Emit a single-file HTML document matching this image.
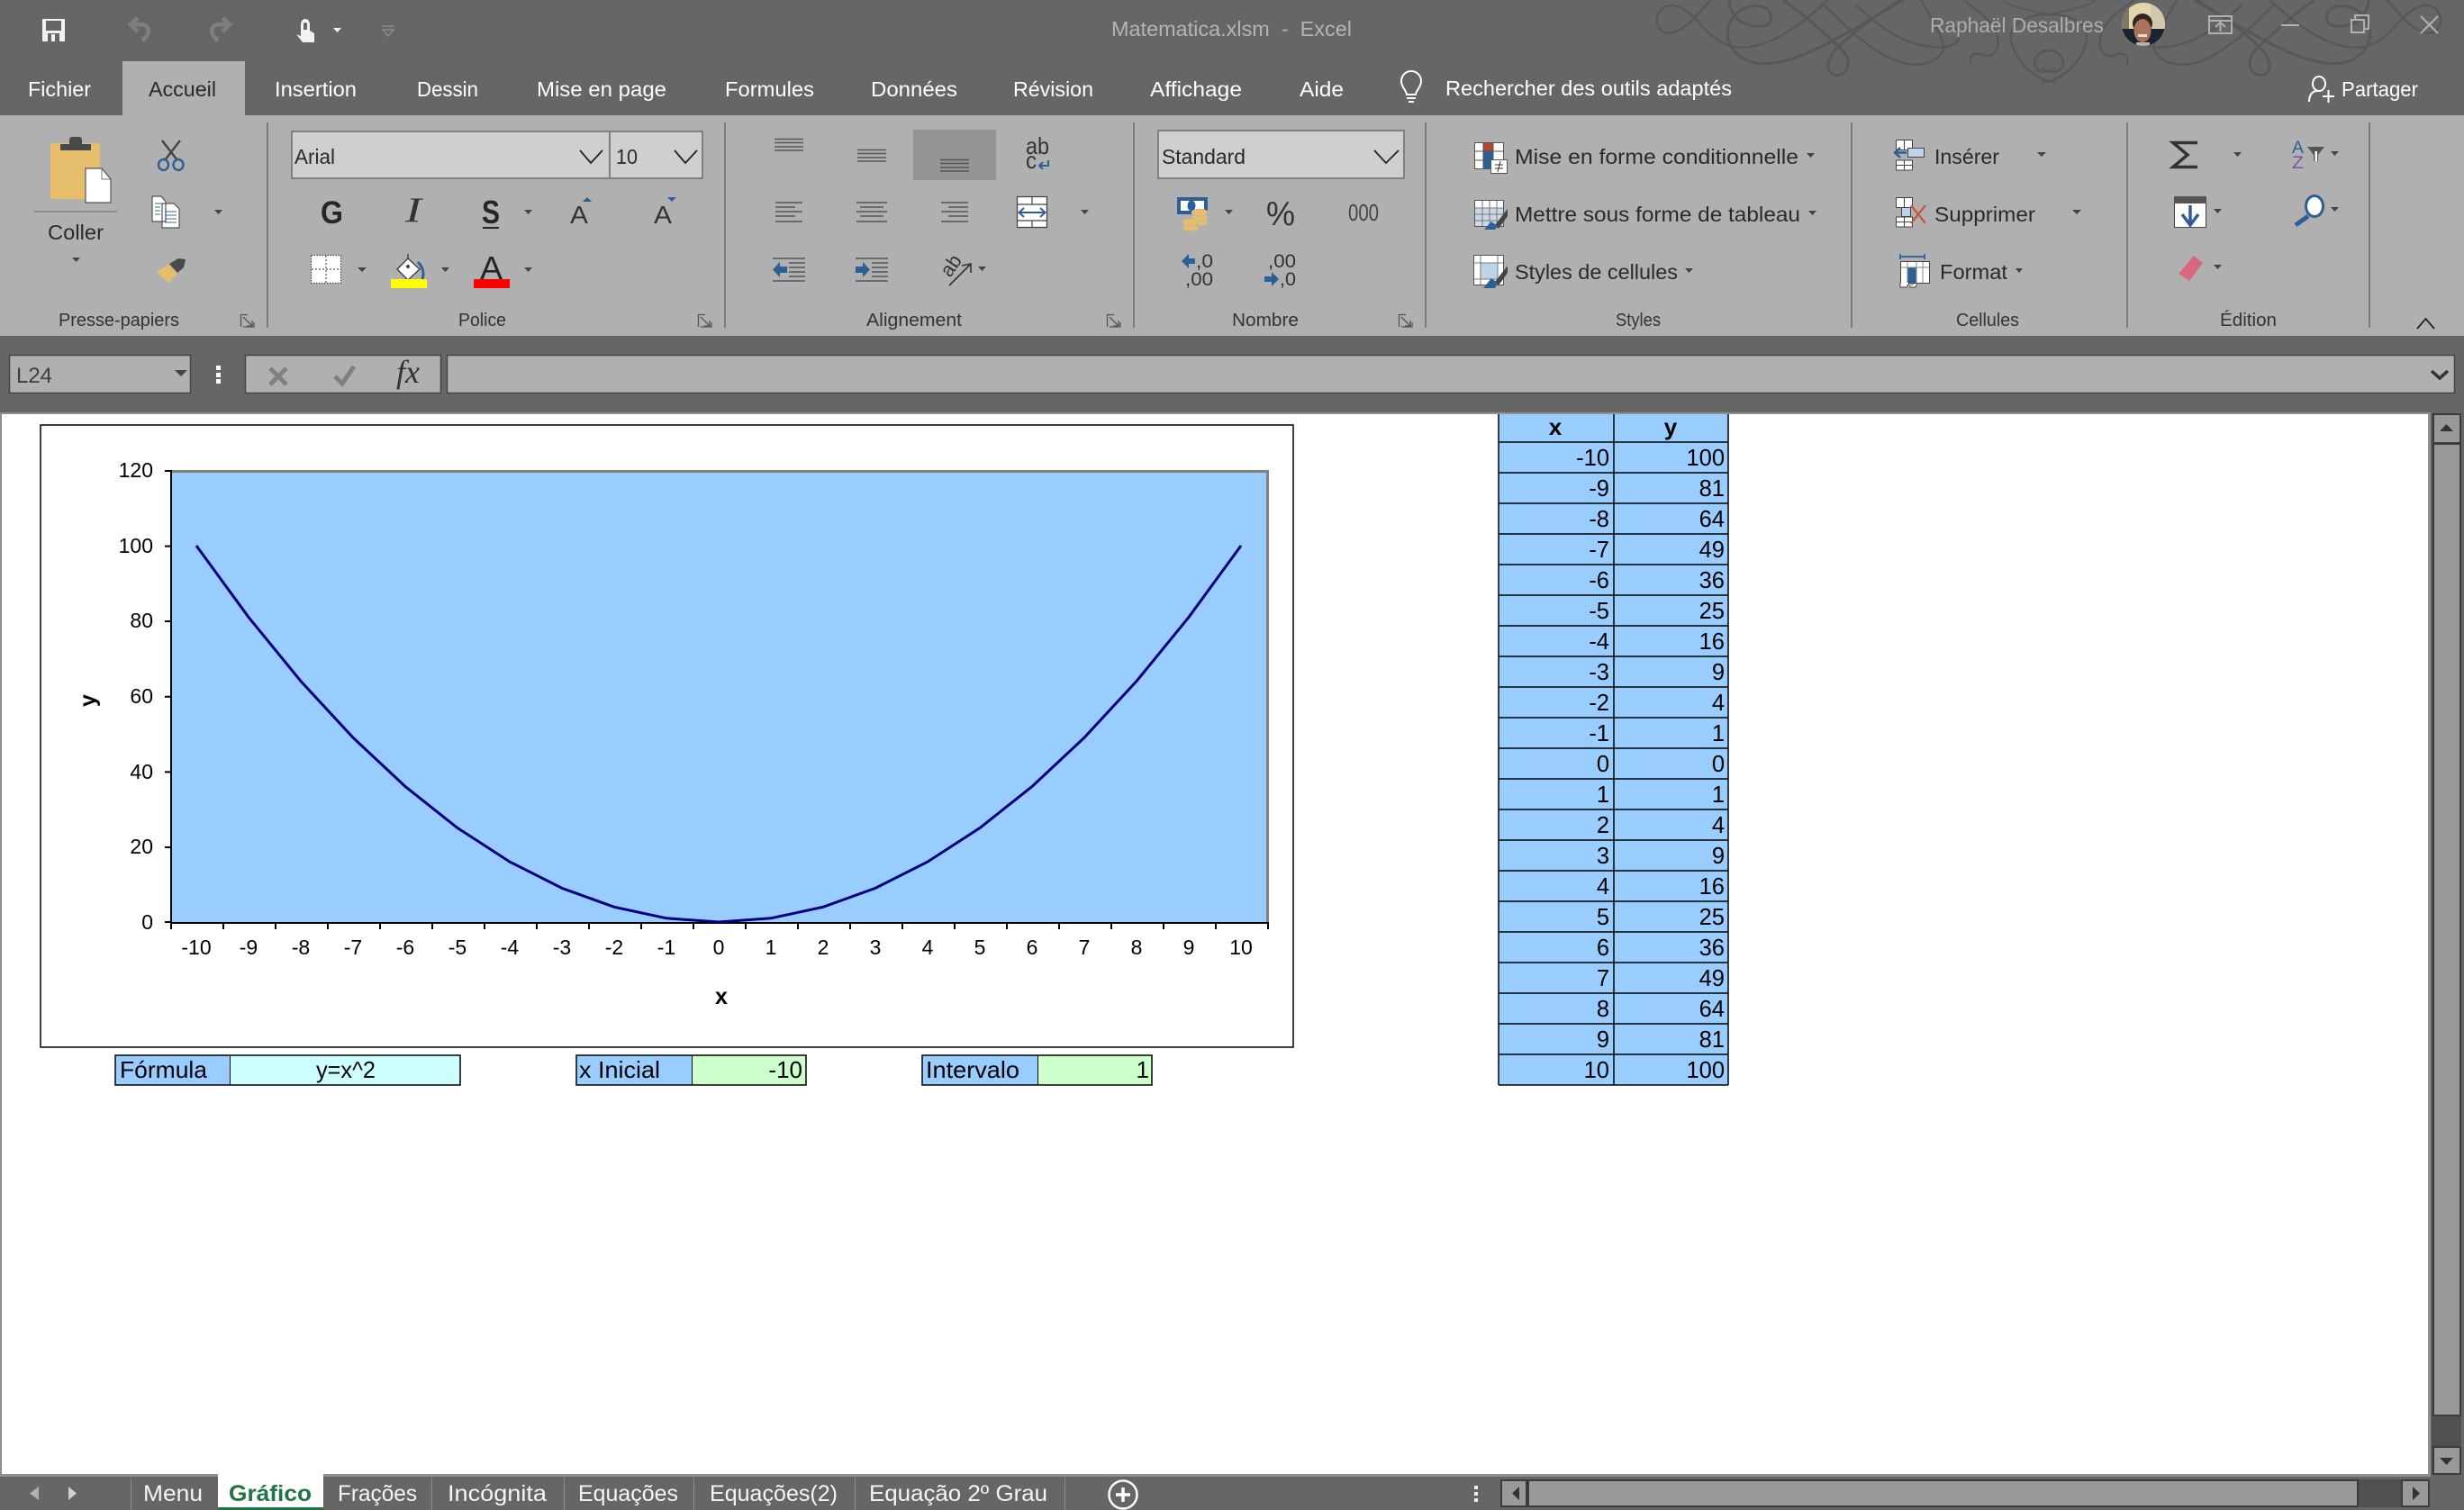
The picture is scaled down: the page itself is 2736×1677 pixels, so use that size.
<!DOCTYPE html>
<html lang="fr">
<head>
<meta charset="utf-8">
<title>Matematica.xlsm - Excel</title>
<style>
html,body{margin:0;padding:0;background:#666;width:2736px;height:1677px;overflow:hidden}
svg{display:block}
text{font-family:"Liberation Sans",Arial,sans-serif}
.w{fill:#fff;font-size:23.5px}
.r{fill:#2a2a2a;font-size:23.5px}
.l{fill:#333;font-size:20.5px}
.c{fill:#000;font-size:25.5px}
.a{fill:#000;font-size:23px}
.tb{fill:#f5f5f5;font-size:25px}
.ln{stroke:#555;stroke-width:1.6;fill:none}
.d{fill:#444}
</style>
</head>
<body>
<svg xmlns="http://www.w3.org/2000/svg" width="2736" height="1677" viewBox="0 0 2736 1677">
<rect width="2736" height="1677" fill="#666"/>

<!-- flourish -->
<g id="fl" transform="translate(1830,0) scale(.3333)" fill="none" stroke="#585858" stroke-width="7">
<path d="M210,0 C170,40 120,110 70,110 C30,110 15,60 45,30 C80,0 130,30 170,75 C210,120 250,158 310,158 C400,158 490,100 600,0"/>
<path d="M270,0 C270,20 280,45 300,65 C330,90 390,95 405,75 C420,50 400,20 360,20 C310,20 265,60 265,110 C265,170 320,212 385,212 C500,212 630,130 850,0" stroke-width="9"/>
<path d="M450,0 C520,50 600,120 650,170 C680,205 665,250 630,250 C590,250 590,200 630,160 C680,110 760,50 840,0" stroke-width="9"/>
<path d="M580,10 C660,90 780,215 890,215 C950,215 990,180 985,150 C975,110 940,60 910,0"/>
<path d="M690,15 C770,90 860,160 980,158 C1040,150 1050,120 1020,90"/>
<path d="M1075,215 C1065,185 1090,170 1120,185 C1160,195 1175,150 1160,110 C1140,60 1090,30 1050,0"/>
<path d="M1360,275 C1280,270 1200,180 1210,110 C1220,70 1280,40 1360,50"/>
<path d="M1360,170 C1310,160 1280,190 1290,220 C1300,250 1340,240 1360,225"/>
<path d="M1180,0 C1200,20 1280,40 1360,50" stroke-width="5"/>
</g>
<use href="#fl" transform="translate(4550,0) scale(-1,1)"/>

<!-- quick access -->
<rect x="47" y="21" width="25" height="25" fill="#f2f2f2"/>
<rect x="51" y="23" width="17" height="11" fill="#666"/>
<rect x="53" y="37" width="13" height="9" fill="#666"/>
<rect x="57" y="38" width="4" height="8" fill="#f2f2f2"/>
<g fill="none" stroke="#7f7f7f" stroke-width="4.5">
<path d="M158,45 C168,37 167,27 155,27 H146"/><path d="M153,20 L145,27 L153,35"/>
<path d="M242,45 C232,37 233,27 245,27 H254"/><path d="M247,20 L255,27 L247,35"/>
</g>
<path d="M334,40 V27 a5,6 0 1 1 10,0 V34 L349,37 V47 H336 L329,38 Z" fill="#f2f2f2"/>
<path d="M337,27 a2,2 0 0 1 4,0 V33 H337 Z" fill="#666"/>
<polygon points="370,31 379,31 374.500,36" fill="#f2f2f2"/>
<path d="M424,29 H438 M425,33 H437 L431,40 Z" fill="none" stroke="#8c8c8c" stroke-width="1.500"/>

<!-- title bar text -->
<text x="1234" y="40" style="font-size:23.500px" fill="#b4b4b4" textLength="267" lengthAdjust="spacingAndGlyphs">Matematica.xlsm &#160;-&#160; Excel</text>
<text x="2143" y="36" style="font-size:23.500px" fill="#adadad" textLength="193" lengthAdjust="spacingAndGlyphs">Raphaël Desalbres</text>

<!-- avatar -->
<clipPath id="av"><circle cx="2380" cy="27" r="24"/></clipPath>
<g clip-path="url(#av)">
<rect x="2356" y="3" width="48" height="48" fill="#e3d6ac"/>
<rect x="2388" y="3" width="16" height="28" fill="#cfc7ae"/>
<rect x="2356" y="3" width="8" height="40" fill="#7d7766"/>
<rect x="2356" y="32" width="48" height="19" fill="#1a2230"/>
<ellipse cx="2379" cy="26" rx="11" ry="11" fill="#33251f"/>
<ellipse cx="2379" cy="34" rx="9.500" ry="13" fill="#a9745a"/>
<rect x="2374" y="38" width="10" height="3" fill="#e8dcd2"/>
<rect x="2372" y="47" width="15" height="5" fill="#aeb3ba"/>
</g>

<!-- window controls -->
<g fill="none" stroke="#b0b0b0" stroke-width="2">
<rect x="2453" y="18" width="25" height="19"/><path d="M2453,23 H2478 M2465.500,35 V25 M2460,30 L2465.500,25 L2471,30"/>
<path d="M2533,28 H2553"/>
<rect x="2611" y="22" width="14" height="14"/><path d="M2615,22 V17 H2630 V32 H2625"/>
<path d="M2688,18 L2707,37 M2707,18 L2688,37"/>
</g>

<!-- ribbon background -->
<rect x="136" y="68" width="136" height="60" fill="#b0b0b0"/>
<rect x="0" y="128" width="2736" height="245" fill="#b0b0b0"/>

<!-- tabs -->
<text class="w" x="31" y="107" textLength="70" lengthAdjust="spacingAndGlyphs">Fichier</text>
<text class="r" x="165" y="107" textLength="75" lengthAdjust="spacingAndGlyphs">Accueil</text>
<text class="w" x="305" y="107" textLength="91" lengthAdjust="spacingAndGlyphs">Insertion</text>
<text class="w" x="463" y="107" textLength="68" lengthAdjust="spacingAndGlyphs">Dessin</text>
<text class="w" x="596" y="107" textLength="144" lengthAdjust="spacingAndGlyphs">Mise en page</text>
<text class="w" x="805" y="107" textLength="99" lengthAdjust="spacingAndGlyphs">Formules</text>
<text class="w" x="967" y="107" textLength="96" lengthAdjust="spacingAndGlyphs">Données</text>
<text class="w" x="1125" y="107" textLength="89" lengthAdjust="spacingAndGlyphs">Révision</text>
<text class="w" x="1277" y="107" textLength="102" lengthAdjust="spacingAndGlyphs">Affichage</text>
<text class="w" x="1443" y="107" textLength="49" lengthAdjust="spacingAndGlyphs">Aide</text>
<g fill="none" stroke="#fff" stroke-width="2">
<path d="M1562,105 C1561,99 1556,97 1556,90 a11,11 0 1 1 22,0 C1578,97 1573,99 1572,105 Z"/><path d="M1562,109 H1572 M1564,113 H1570"/>
</g>
<text class="w" x="1605" y="106" textLength="318" lengthAdjust="spacingAndGlyphs">Rechercher des outils adaptés</text>
<g fill="none" stroke="#fff" stroke-width="2">
<ellipse cx="2575" cy="93" rx="7" ry="8"/><path d="M2564,113 C2564,105 2568,101 2573,101 M2579,107 H2592 M2585.500,100 V114"/>
</g>
<text class="w" x="2600" y="107" textLength="85" lengthAdjust="spacingAndGlyphs">Partager</text>

<!-- group separators -->
<g fill="#7c7c7c">
<rect x="296" y="136" width="2" height="228"/><rect x="804" y="136" width="2" height="228"/>
<rect x="1258" y="136" width="2" height="228"/><rect x="1582" y="136" width="2" height="228"/>
<rect x="2055" y="136" width="2" height="228"/><rect x="2361" y="136" width="2" height="228"/>
<rect x="2630" y="136" width="2" height="228"/>
</g>

<!-- group labels -->
<text class="l" x="65" y="362" textLength="134" lengthAdjust="spacingAndGlyphs">Presse-papiers</text>
<text class="l" x="509" y="362" textLength="53" lengthAdjust="spacingAndGlyphs">Police</text>
<text class="l" x="962" y="362" textLength="106" lengthAdjust="spacingAndGlyphs">Alignement</text>
<text class="l" x="1368" y="362" textLength="74" lengthAdjust="spacingAndGlyphs">Nombre</text>
<text class="l" x="1794" y="362" textLength="50" lengthAdjust="spacingAndGlyphs">Styles</text>
<text class="l" x="2172" y="362" textLength="70" lengthAdjust="spacingAndGlyphs">Cellules</text>
<text class="l" x="2465" y="362" textLength="63" lengthAdjust="spacingAndGlyphs">Édition</text>

<!-- launchers -->
<g id="ln1" fill="none" stroke="#555" stroke-width="1.300">
<path d="M267.500,363 V349.500 H275 M270,352 L280,362 M280,356 V362 H274 M282,358 V363 H270"/>
</g>
<use href="#ln1" x="508"/><use href="#ln1" x="962"/><use href="#ln1" x="1286"/>

<!-- clipboard -->
<rect x="56" y="159" width="55" height="62" rx="3" fill="#e5bd6b"/>
<path d="M67,167 V160 H77 V155 a3,3 0 0 1 3,-3 h8 a3,3 0 0 1 3,3 V160 H101 V167 Z" fill="#4a4a4a"/>
<path d="M95,187 H113 L123,199 V225 H95 Z" fill="#fff" stroke="#555" stroke-width="1.200"/>
<path d="M113,187 V199 H123" fill="none" stroke="#777" stroke-width="1"/>
<rect x="38" y="234" width="92" height="2" fill="#8e8e8e"/>
<text class="r" x="53" y="266" textLength="62" lengthAdjust="spacingAndGlyphs">Coller</text>
<polygon class="d" points="80,286 89,286 84.500,291"/>
<g fill="none" stroke="#444" stroke-width="2.400"><path d="M180,156 L197,178 M200,156 L183,178"/></g>
<g fill="none" stroke="#2b5f96" stroke-width="2.400"><ellipse cx="181.500" cy="183" rx="5.500" ry="6"/><ellipse cx="198" cy="183" rx="5.500" ry="6"/></g>
<path d="M169,218 H179 L184,224 V246 H169 Z M180,226 H193 L199,232 V253 H180 Z" fill="#fff" stroke="#555" stroke-width="1.200"/>
<path d="M172,226 H181 M172,230 H178 M172,234 H178 M172,238 H178 M183,235 H196 M183,239 H196 M183,243 H196 M183,247 H196" stroke="#3b6d99" stroke-width="1"/>
<polygon class="d" points="238,233 247,233 242.500,238"/>
<path d="M174,302 L187,294 L197,304 L187,314 Z" fill="#e5bd6b"/>
<path d="M188,293 L198,287 L206,288 L204,297 L197,303 Z" fill="#4a4a4a"/>

<!-- font boxes -->
<rect x="324" y="146" width="353" height="52" fill="#cfcfcf" stroke="#808080" stroke-width="2"/>
<rect x="677" y="146" width="103" height="52" fill="#cfcfcf" stroke="#808080" stroke-width="2"/>
<text class="r" x="327" y="182" textLength="45" lengthAdjust="spacingAndGlyphs">Arial</text>
<text class="r" x="684" y="182" textLength="24" lengthAdjust="spacingAndGlyphs">10</text>
<path d="M644,167 L656,181 L669,167 M749,167 L761,181 L774,167" fill="none" stroke="#222" stroke-width="1.800"/>
<text x="356" y="248" style="font-size:35px;font-weight:bold" fill="#262626" textLength="25" lengthAdjust="spacingAndGlyphs">G</text>
<text x="450" y="246" style="font-family:'Liberation Serif',serif;font-size:39px;font-style:italic" fill="#333" textLength="18" lengthAdjust="spacingAndGlyphs">I</text>
<text x="535" y="248" style="font-size:36px;font-weight:bold" fill="#262626" textLength="20" lengthAdjust="spacingAndGlyphs">S</text>
<rect x="536" y="252" width="18" height="2" fill="#262626"/>
<polygon class="d" points="582,233 591,233 586.500,238"/>
<text x="633" y="248" style="font-size:28px" fill="#333" textLength="20" lengthAdjust="spacingAndGlyphs">A</text>
<polygon points="647,224 657,224 652,219" fill="#2b5f96"/>
<text x="726" y="248" style="font-size:28px" fill="#333" textLength="20" lengthAdjust="spacingAndGlyphs">A</text>
<polygon points="741,219 751,219 746,224" fill="#2b5f96"/>
<rect x="345.500" y="283.500" width="33" height="31" fill="#fff" stroke="#444" stroke-width="1.200" stroke-dasharray="1.500 1.500"/>
<path d="M362,284 V314 M346,299 H378" stroke="#555" stroke-width="1.200" stroke-dasharray="2 2"/>
<polygon class="d" points="397,297 407,297 402,302"/>
<path d="M453,282 V296" stroke="#444" stroke-width="1.500"/>
<path d="M453,287 L466,299 L453,311 L441,299 Z" fill="#fff" stroke="#444" stroke-width="1.500"/>
<circle cx="453" cy="296" r="2" fill="#444"/>
<path d="M464,291 C470,297 471,304 469,310" fill="none" stroke="#2b5f96" stroke-width="3"/>
<rect x="434" y="310" width="40" height="10" fill="#ffff00"/>
<polygon class="d" points="490,297 499,297 494.500,302"/>
<text x="533" y="310" style="font-size:36px" fill="#262626" textLength="25" lengthAdjust="spacingAndGlyphs">A</text>
<rect x="526" y="310" width="40" height="10" fill="#f00"/>
<polygon class="d" points="582,297 591,297 586.500,302"/>

<!-- alignment -->
<rect x="1014" y="144" width="92" height="56" fill="#959595"/>
<path class="ln" d="M860,154.500 H892 M860,158.500 H892 M860,163 H892 M860,167 H892 M952,166.500 H984 M952,170.500 H984 M952,175 H984 M952,179 H984 M1044,177.500 H1076 M1044,181.500 H1076 M1044,186 H1076 M1044,190 H1076"/>
<text x="1139" y="171" style="font-size:26px" fill="#333" textLength="26" lengthAdjust="spacingAndGlyphs">ab</text>
<text x="1139" y="187" style="font-size:26px" fill="#333" textLength="12" lengthAdjust="spacingAndGlyphs">c</text>
<path d="M1164,178 V184 H1155 M1158,180 L1154,184 L1158,188" fill="none" stroke="#2b5f96" stroke-width="2"/>
<path class="ln" d="M861,225 H891 M861,230 H883 M861,235 H891 M861,240 H883 M861,246 H891 M951,225 H985 M955,230 H981 M951,235 H985 M955,240 H981 M951,246 H985 M1045,225 H1075 M1053,230 H1075 M1045,235 H1075 M1053,240 H1075 M1045,246 H1075"/>
<rect x="1129.500" y="218.500" width="33" height="34" fill="#fff" stroke="#444" stroke-width="1.300"/>
<path d="M1130,227 H1162 M1130,245 H1162 M1146,219 V227 M1146,245 V252" stroke="#444" stroke-width="1.200"/>
<path d="M1132,236 H1160 M1137,231 L1131.500,236 L1137,241 M1155,231 L1160.500,236 L1155,241" fill="none" stroke="#2b5f96" stroke-width="2"/>
<polygon class="d" points="1200,233 1209,233 1204.500,238"/>
<path class="ln" d="M858,287 H894 M876,292 H894 M876,297 H894 M876,302 H894 M876,307 H894 M858,312 H894 M950,287 H986 M968,292 H986 M968,297 H986 M968,302 H986 M968,307 H986 M950,312 H986"/>
<polygon points="858,299.500 866,291 866,296 874,296 874,303 866,303 866,308" fill="#2b5f96"/>
<polygon points="966,299.500 958,291 958,296 950,296 950,303 958,303 958,308" fill="#2b5f96"/>
<text x="0" y="0" transform="translate(1055,309) rotate(-55)" style="font-size:22px" fill="#333" textLength="24" lengthAdjust="spacingAndGlyphs">ab</text>
<path d="M1054,317 L1078,293 M1068,295 L1078,293 L1078,303" fill="none" stroke="#333" stroke-width="1.600"/>
<polygon class="d" points="1086,296 1095,296 1090.500,301"/>

<!-- number -->
<rect x="1286" y="145" width="273" height="53" fill="#cfcfcf" stroke="#808080" stroke-width="2"/>
<text class="r" x="1290" y="182" textLength="93" lengthAdjust="spacingAndGlyphs">Standard</text>
<path d="M1526,167 L1539,181 L1553,167" fill="none" stroke="#222" stroke-width="1.800"/>
<rect x="1307" y="219" width="34" height="19" fill="#2b5f96"/>
<polygon points="1311,223 1337,223 1337,234 1311,234" fill="#fff"/>
<ellipse cx="1323" cy="228.500" rx="4.500" ry="6" fill="#2b5f96"/>
<g fill="#e5bd6b" stroke="#b0b0b0" stroke-width=".6">
<ellipse cx="1332" cy="247" rx="9" ry="4"/><ellipse cx="1332" cy="241.500" rx="9" ry="4"/><ellipse cx="1332" cy="236" rx="9" ry="4"/>
<ellipse cx="1322" cy="253" rx="9" ry="4"/><ellipse cx="1322" cy="247" rx="9" ry="4"/>
</g>
<polygon class="d" points="1360,233 1369,233 1364.500,238"/>
<text x="1406" y="250" style="font-size:38px" fill="#333" textLength="32" lengthAdjust="spacingAndGlyphs">%</text>
<text x="1497" y="245" style="font-size:26px" fill="#444" textLength="34" lengthAdjust="spacingAndGlyphs">000</text>
<polygon points="1312,290 1320,282 1320,287 1327,287 1327,293 1320,293 1320,298" fill="#2b5f96"/>
<text x="1328" y="297" style="font-size:21px" fill="#333" textLength="19" lengthAdjust="spacingAndGlyphs">,0</text>
<text x="1316" y="317" style="font-size:21px" fill="#333" textLength="31" lengthAdjust="spacingAndGlyphs">,00</text>
<text x="1408" y="297" style="font-size:21px" fill="#333" textLength="31" lengthAdjust="spacingAndGlyphs">,00</text>
<polygon points="1420,310 1412,302 1412,307 1404,307 1404,313 1412,313 1412,318" fill="#2b5f96"/>
<text x="1421" y="317" style="font-size:21px" fill="#333" textLength="18" lengthAdjust="spacingAndGlyphs">,0</text>

<!-- styles -->
<rect x="1637.500" y="158.500" width="32" height="29" fill="#fff" stroke="#555" stroke-width="1"/>
<rect x="1647" y="159" width="11" height="9" fill="#b5452c"/><rect x="1647" y="168" width="11" height="10" fill="#2b5f96"/><rect x="1647" y="178" width="11" height="9" fill="#2b5f96"/>
<path d="M1638,168 H1669 M1638,178 H1669 M1647,159 V187 M1658,159 V187" stroke="#555" stroke-width="1"/>
<rect x="1655.500" y="177.500" width="18" height="15" fill="#fff" stroke="#555" stroke-width="1"/>
<path d="M1660,183 H1669 M1660,187 H1669 M1666,179 L1663,191" stroke="#333" stroke-width="1"/>
<text class="r" x="1682" y="182" textLength="315" lengthAdjust="spacingAndGlyphs">Mise en forme conditionnelle</text>
<polygon class="d" points="2006,170 2015,170 2010.500,175"/>
<rect x="1637.500" y="222.500" width="32" height="29" fill="#c9d9ea" stroke="#555" stroke-width="1"/>
<rect x="1638" y="223" width="31" height="8" fill="#fff"/>
<path d="M1638,231 H1669 M1638,238 H1669 M1638,245 H1669 M1646,223 V251 M1654,223 V251 M1662,223 V251" stroke="#777" stroke-width="1"/>
<path d="M1674,232 L1660,250 L1664,254 L1674,240 Z" fill="#444"/>
<path d="M1656,246 L1663,251 L1660,255 H1648 Z" fill="#2b5f96"/>
<text class="r" x="1682" y="246" textLength="317" lengthAdjust="spacingAndGlyphs">Mettre sous forme de tableau</text>
<polygon class="d" points="2008,234 2017,234 2012.500,239"/>
<rect x="1636.500" y="283.500" width="33" height="33" fill="#fff" stroke="#555" stroke-width="1"/>
<rect x="1644" y="292" width="19" height="18" fill="#bcd3e8"/>
<path d="M1637,292 H1669 M1637,310 H1669 M1644,284 V316 M1663,284 V316" stroke="#777" stroke-width="1"/>
<path d="M1674,295 L1660,313 L1664,317 L1674,303 Z" fill="#444"/>
<path d="M1656,309 L1663,314 L1660,320 H1647 Z" fill="#2b5f96"/>
<text class="r" x="1682" y="310" textLength="181" lengthAdjust="spacingAndGlyphs">Styles de cellules</text>
<polygon class="d" points="1871,298 1880,298 1875.500,303"/>

<!-- cells -->
<g fill="#fff" stroke="#444" stroke-width="1">
<rect x="2105.500" y="155.500" width="18" height="11"/><rect x="2105.500" y="178" width="18" height="11"/>
<rect x="2118.500" y="164.500" width="18" height="10" fill="#bcd3e8"/>
<path d="M2114.500,155 V167 M2114.500,178 V189 M2105,183.500 H2124" fill="none"/>
</g>
<path d="M2117,169.500 H2106 M2110,164 L2104,169.500 L2110,175" fill="none" stroke="#2b5f96" stroke-width="2.500"/>
<text class="r" x="2148" y="182" textLength="72" lengthAdjust="spacingAndGlyphs">Insérer</text>
<polygon class="d" points="2262,169 2272,169 2267,174"/>
<g fill="#fff" stroke="#444" stroke-width="1">
<rect x="2105.500" y="219.500" width="18" height="11"/><rect x="2105.500" y="241" width="18" height="11"/>
<rect x="2111.500" y="230.500" width="10" height="10" fill="#bcd3e8"/>
<path d="M2114.500,219 V231 M2114.500,241 V252 M2105,246.500 H2124" fill="none"/>
</g>
<path d="M2122,228 L2138,248 M2138,228 L2122,248" stroke="#c8522f" stroke-width="2.200"/>
<text class="r" x="2148" y="246" textLength="112" lengthAdjust="spacingAndGlyphs">Supprimer</text>
<polygon class="d" points="2301,233 2311,233 2306,238"/>
<path d="M2110,282 V288 M2137,282 V288 M2111,285 H2136" stroke="#2b5f96" stroke-width="1.800"/>
<rect x="2110.500" y="290.500" width="32" height="24" fill="#fff" stroke="#444" stroke-width="1"/>
<rect x="2118" y="297" width="10" height="17" fill="#2b5f96"/>
<path d="M2111,297 H2142 M2118,291 V314 M2128,291 V314 M2135,291 V314" stroke="#888" stroke-width="1"/>
<path d="M2110,314 V319 H2117 L2120,314 M2120,319 H2127 L2129,314" fill="#fff" stroke="#444" stroke-width="1"/>
<text class="r" x="2154" y="310" textLength="75" lengthAdjust="spacingAndGlyphs">Format</text>
<polygon class="d" points="2238,298 2246,298 2242,303"/>

<!-- editing -->
<path d="M2440,158.500 H2413 L2429,172 L2413,185.500 H2440" fill="none" stroke="#333" stroke-width="3.500"/>
<polygon class="d" points="2480,169 2489,169 2484.500,174"/>
<text x="2545" y="170" style="font-size:19px" fill="#2b5f96" textLength="13" lengthAdjust="spacingAndGlyphs">A</text>
<text x="2545" y="187" style="font-size:19px" fill="#7a5aa6" textLength="13" lengthAdjust="spacingAndGlyphs">Z</text>
<path d="M2562,163 H2581 L2574,172 V179 H2569 V172 Z" fill="#555"/>
<rect x="2570.500" y="168" width="2.500" height="11" fill="#fff"/>
<polygon class="d" points="2588,168 2597,168 2592.500,173"/>
<rect x="2414.500" y="218.500" width="35" height="34" fill="#fff" stroke="#444" stroke-width="1"/>
<rect x="2414" y="218" width="36" height="8" fill="#555"/>
<path d="M2432,228 V249" stroke="#2b5f96" stroke-width="3.500"/>
<path d="M2423,238 L2432,250 L2441,238" fill="none" stroke="#2b5f96" stroke-width="3.500"/>
<polygon class="d" points="2458,232 2467,232 2462.500,237"/>
<ellipse cx="2570" cy="229" rx="9.500" ry="11.500" fill="#fff" stroke="#2b5f96" stroke-width="3"/>
<path d="M2563,240 L2549,250" stroke="#2b5f96" stroke-width="5"/>
<polygon class="d" points="2588,230 2597,230 2592.500,235"/>
<path d="M2436,284 L2446,292 L2431,312 L2419,304 Z" fill="#d9687f"/>
<polygon class="d" points="2458,294 2467,294 2462.500,299"/>
<path d="M2684,365 L2693.500,354 L2703,365" fill="none" stroke="#222" stroke-width="1.800"/>

<!-- formula bar -->
<rect x="10.500" y="394.500" width="201" height="42" fill="#b0b0b0" stroke="#444" stroke-width="1.500"/>
<text x="18" y="425" style="font-size:24px" fill="#3e3e3e" textLength="40" lengthAdjust="spacingAndGlyphs">L24</text>
<polygon points="194,411 208,411 201,418" fill="#444"/>
<g fill="#fff"><rect x="240" y="406" width="5" height="5"/><rect x="240" y="414" width="5" height="5"/><rect x="240" y="421" width="5" height="5"/></g>
<rect x="272.500" y="394.500" width="217" height="42" fill="#b0b0b0" stroke="#444" stroke-width="1.500"/>
<path d="M300,409 L318,427 M318,409 L300,427" stroke="#808080" stroke-width="5"/>
<path d="M372,418 L380,426 L393,407" fill="none" stroke="#808080" stroke-width="5"/>
<text x="440" y="425" style="font-family:'Liberation Serif',serif;font-size:36px;font-style:italic" fill="#333" textLength="26" lengthAdjust="spacingAndGlyphs">fx</text>
<rect x="496.500" y="394.500" width="2229" height="42" fill="#b0b0b0" stroke="#444" stroke-width="1.500"/>
<path d="M2700,412 L2709,420 L2718,412" fill="none" stroke="#333" stroke-width="3.500"/>

<!-- sheet -->
<rect x="0" y="458" width="2699" height="1182" fill="#8f8f8f"/>
<rect x="2" y="460" width="2694" height="1177" fill="#fff"/>

<!-- scrollbars -->
<rect x="2700" y="459" width="33" height="1179" fill="#505050"/>
<rect x="2702" y="460" width="30" height="32" fill="#999" stroke="#3c3c3c" stroke-width="2"/>
<polygon points="2709,479 2724,479 2716.500,471" fill="#333"/>
<rect x="2702" y="493" width="30" height="1079" fill="#999" stroke="#3c3c3c" stroke-width="2"/>
<rect x="2702" y="1607" width="30" height="30" fill="#999" stroke="#3c3c3c" stroke-width="2"/>
<polygon points="2709,1619 2724,1619 2716.500,1627" fill="#333"/>
<rect x="1666" y="1643" width="1032" height="31" fill="#505050"/>
<rect x="1667" y="1644" width="28" height="29" fill="#999" stroke="#3c3c3c" stroke-width="2"/>
<polygon points="1687,1651 1687,1666 1679,1658.500" fill="#333"/>
<rect x="1697" y="1644" width="921" height="29" fill="#999" stroke="#3c3c3c" stroke-width="2"/>
<rect x="2667" y="1644" width="30" height="29" fill="#999" stroke="#3c3c3c" stroke-width="2"/>
<polygon points="2679,1651 2679,1666 2687,1658.500" fill="#333"/>

<!-- chart -->
<rect x="45" y="472" width="1391" height="691" fill="#fff" stroke="#000" stroke-width="1.500"/>
<rect x="190" y="523" width="1218" height="501" fill="#99ccff"/>
<rect x="190" y="522" width="1218" height="3" fill="#808080"/>
<rect x="1406" y="522" width="3" height="502" fill="#808080"/>
<path d="M190,522 V1025 H1408" fill="none" stroke="#000" stroke-width="2"/>
<path d="M183,523 H190 M183,606.600 H190 M183,690 H190 M183,773.800 H190 M183,857.400 H190 M183,941 H190 M183,1024 H190" stroke="#000" stroke-width="2"/>
<path d="M190,1024 V1032 M248,1024 V1032 M306,1024 V1032 M364,1024 V1032 M422,1024 V1032 M480,1024 V1032 M538,1024 V1032 M596,1024 V1032 M654,1024 V1032 M712,1024 V1032 M770,1024 V1032 M828,1024 V1032 M886,1024 V1032 M944,1024 V1032 M1002,1024 V1032 M1060,1024 V1032 M1118,1024 V1032 M1176,1024 V1032 M1234,1024 V1032 M1292,1024 V1032 M1350,1024 V1032 M1408,1024 V1032" stroke="#000" stroke-width="2"/>
<polyline points="218,606 276,685.400 334,756.500 392,819.200 450,873.500 508,919.500 566,957.100 624,986.400 682,1007.300 740,1019.800 798,1024 856,1019.800 914,1007.300 972,986.400 1030,957.100 1088,919.500 1146,873.500 1204,819.200 1262,756.500 1320,685.400 1378,606" fill="none" stroke="#000080" stroke-width="3"/>
<g class="a" text-anchor="end">
<text class="a" x="170" y="530">120</text><text class="a" x="170" y="614">100</text><text class="a" x="170" y="697">80</text><text class="a" x="170" y="781">60</text><text class="a" x="170" y="865">40</text><text class="a" x="170" y="948">20</text><text class="a" x="170" y="1032">0</text>
</g>
<g text-anchor="middle" transform="translate(-1,0)">
<text class="a" x="219" y="1060">-10</text><text class="a" x="277" y="1060">-9</text><text class="a" x="335" y="1060">-8</text><text class="a" x="393" y="1060">-7</text><text class="a" x="451" y="1060">-6</text><text class="a" x="509" y="1060">-5</text><text class="a" x="567" y="1060">-4</text><text class="a" x="625" y="1060">-3</text><text class="a" x="683" y="1060">-2</text><text class="a" x="741" y="1060">-1</text><text class="a" x="799" y="1060">0</text><text class="a" x="857" y="1060">1</text><text class="a" x="915" y="1060">2</text><text class="a" x="973" y="1060">3</text><text class="a" x="1031" y="1060">4</text><text class="a" x="1089" y="1060">5</text><text class="a" x="1147" y="1060">6</text><text class="a" x="1205" y="1060">7</text><text class="a" x="1263" y="1060">8</text><text class="a" x="1321" y="1060">9</text><text class="a" x="1379" y="1060">10</text>
<text x="802" y="1115" style="font-size:25px;font-weight:bold" fill="#000">x</text>
<text x="0" y="0" transform="translate(107,778) rotate(-90)" style="font-size:25px;font-weight:bold" fill="#000">y</text>
</g>

<!-- parameter boxes -->
<rect x="128" y="1172" width="127" height="33" fill="#99ccff"/><rect x="255" y="1172" width="256" height="33" fill="#ccffff"/>
<rect x="128" y="1172" width="383" height="33" fill="none" stroke="#000" stroke-width="1.500"/><path d="M255.500,1172 V1205" stroke="#000" stroke-width="1"/>
<text class="c" x="133" y="1197" style="font-size:26px" textLength="97" lengthAdjust="spacingAndGlyphs">Fórmula</text>
<text class="c" x="351" y="1197" style="font-size:26px" textLength="66" lengthAdjust="spacingAndGlyphs">y=x^2</text>
<rect x="640" y="1172" width="128" height="33" fill="#99ccff"/><rect x="768" y="1172" width="127" height="33" fill="#ccffcc"/>
<rect x="640" y="1172" width="255" height="33" fill="none" stroke="#000" stroke-width="1.500"/><path d="M768.500,1172 V1205" stroke="#000" stroke-width="1"/>
<text class="c" x="643" y="1197" style="font-size:26px" textLength="90" lengthAdjust="spacingAndGlyphs">x Inicial</text>
<text class="c" x="891" y="1197" style="font-size:26px" text-anchor="end">-10</text>
<rect x="1024" y="1172" width="128" height="33" fill="#99ccff"/><rect x="1152" y="1172" width="127" height="33" fill="#ccffcc"/>
<rect x="1024" y="1172" width="255" height="33" fill="none" stroke="#000" stroke-width="1.500"/><path d="M1152.500,1172 V1205" stroke="#000" stroke-width="1"/>
<text class="c" x="1028" y="1197" style="font-size:26px" textLength="104" lengthAdjust="spacingAndGlyphs">Intervalo</text>
<text class="c" x="1276" y="1197" style="font-size:26px" text-anchor="end">1</text>

<!-- table -->
<rect x="1664" y="460" width="255" height="745" fill="#99ccff"/>
<path d="M1664,460 V1205 M1792,460 V1205 M1919,460 V1205 M1664,491 H1919 M1664,525 H1919 M1664,559 H1919 M1664,593 H1919 M1664,627 H1919 M1664,661 H1919 M1664,695 H1919 M1664,729 H1919 M1664,763 H1919 M1664,797 H1919 M1664,831 H1919 M1664,865 H1919 M1664,899 H1919 M1664,933 H1919 M1664,967 H1919 M1664,1001 H1919 M1664,1035 H1919 M1664,1069 H1919 M1664,1103 H1919 M1664,1137 H1919 M1664,1171 H1919 M1664,1205 H1919" stroke="#000" stroke-width="1.500" fill="none"/>
<text x="1727" y="483" style="font-size:26px;font-weight:bold" fill="#000" text-anchor="middle">x</text>
<text x="1855" y="483" style="font-size:26px;font-weight:bold" fill="#000" text-anchor="middle">y</text>
<g text-anchor="end" transform="translate(0,-1)">
<text class="c" x="1787" y="518">-10</text><text class="c" x="1915" y="518">100</text>
<text class="c" x="1787" y="552">-9</text><text class="c" x="1915" y="552">81</text>
<text class="c" x="1787" y="586">-8</text><text class="c" x="1915" y="586">64</text>
<text class="c" x="1787" y="620">-7</text><text class="c" x="1915" y="620">49</text>
<text class="c" x="1787" y="654">-6</text><text class="c" x="1915" y="654">36</text>
<text class="c" x="1787" y="688">-5</text><text class="c" x="1915" y="688">25</text>
<text class="c" x="1787" y="722">-4</text><text class="c" x="1915" y="722">16</text>
<text class="c" x="1787" y="756">-3</text><text class="c" x="1915" y="756">9</text>
<text class="c" x="1787" y="790">-2</text><text class="c" x="1915" y="790">4</text>
<text class="c" x="1787" y="824">-1</text><text class="c" x="1915" y="824">1</text>
<text class="c" x="1787" y="858">0</text><text class="c" x="1915" y="858">0</text>
<text class="c" x="1787" y="892">1</text><text class="c" x="1915" y="892">1</text>
<text class="c" x="1787" y="926">2</text><text class="c" x="1915" y="926">4</text>
<text class="c" x="1787" y="960">3</text><text class="c" x="1915" y="960">9</text>
<text class="c" x="1787" y="994">4</text><text class="c" x="1915" y="994">16</text>
<text class="c" x="1787" y="1028">5</text><text class="c" x="1915" y="1028">25</text>
<text class="c" x="1787" y="1062">6</text><text class="c" x="1915" y="1062">36</text>
<text class="c" x="1787" y="1096">7</text><text class="c" x="1915" y="1096">49</text>
<text class="c" x="1787" y="1130">8</text><text class="c" x="1915" y="1130">64</text>
<text class="c" x="1787" y="1164">9</text><text class="c" x="1915" y="1164">81</text>
<text class="c" x="1787" y="1198">10</text><text class="c" x="1915" y="1198">100</text>
</g>

<!-- sheet tabs -->
<polygon points="43,1651 43,1666 33,1658.500" fill="#b0b0b0"/>
<polygon points="76,1651 76,1666 85,1658.500" fill="#d0d0d0"/>
<path d="M145.500,1641 V1677 M479.500,1641 V1677 M626.500,1641 V1677 M770.500,1641 V1677 M949.500,1641 V1677 M1182.500,1641 V1677" stroke="#8c8c8c" stroke-width="1"/>
<rect x="242" y="1637" width="117" height="40" fill="#fff"/>
<rect x="242" y="1674" width="117" height="3" fill="#217346"/>
<text class="tb" x="159" y="1667" textLength="66" lengthAdjust="spacingAndGlyphs">Menu</text>
<text x="254" y="1667" style="font-size:25px;font-weight:bold" fill="#217346" textLength="92" lengthAdjust="spacingAndGlyphs">Gráfico</text>
<text class="tb" x="375" y="1667" textLength="88" lengthAdjust="spacingAndGlyphs">Frações</text>
<text class="tb" x="497" y="1667" textLength="110" lengthAdjust="spacingAndGlyphs">Incógnita</text>
<text class="tb" x="642" y="1667" textLength="111" lengthAdjust="spacingAndGlyphs">Equações</text>
<text class="tb" x="788" y="1667" textLength="142" lengthAdjust="spacingAndGlyphs">Equações(2)</text>
<text class="tb" x="965" y="1667" textLength="198" lengthAdjust="spacingAndGlyphs">Equação 2º Grau</text>
<circle cx="1247" cy="1660" r="15.500" fill="none" stroke="#fff" stroke-width="2.500"/>
<path d="M1239,1660 H1255 M1247,1652 V1668" stroke="#fff" stroke-width="3.500"/>
<g fill="#f0f0f0"><rect x="1637" y="1650" width="4" height="4"/><rect x="1637" y="1657" width="4" height="4"/><rect x="1637" y="1664" width="4" height="4"/></g>
</svg>
</body>
</html>
